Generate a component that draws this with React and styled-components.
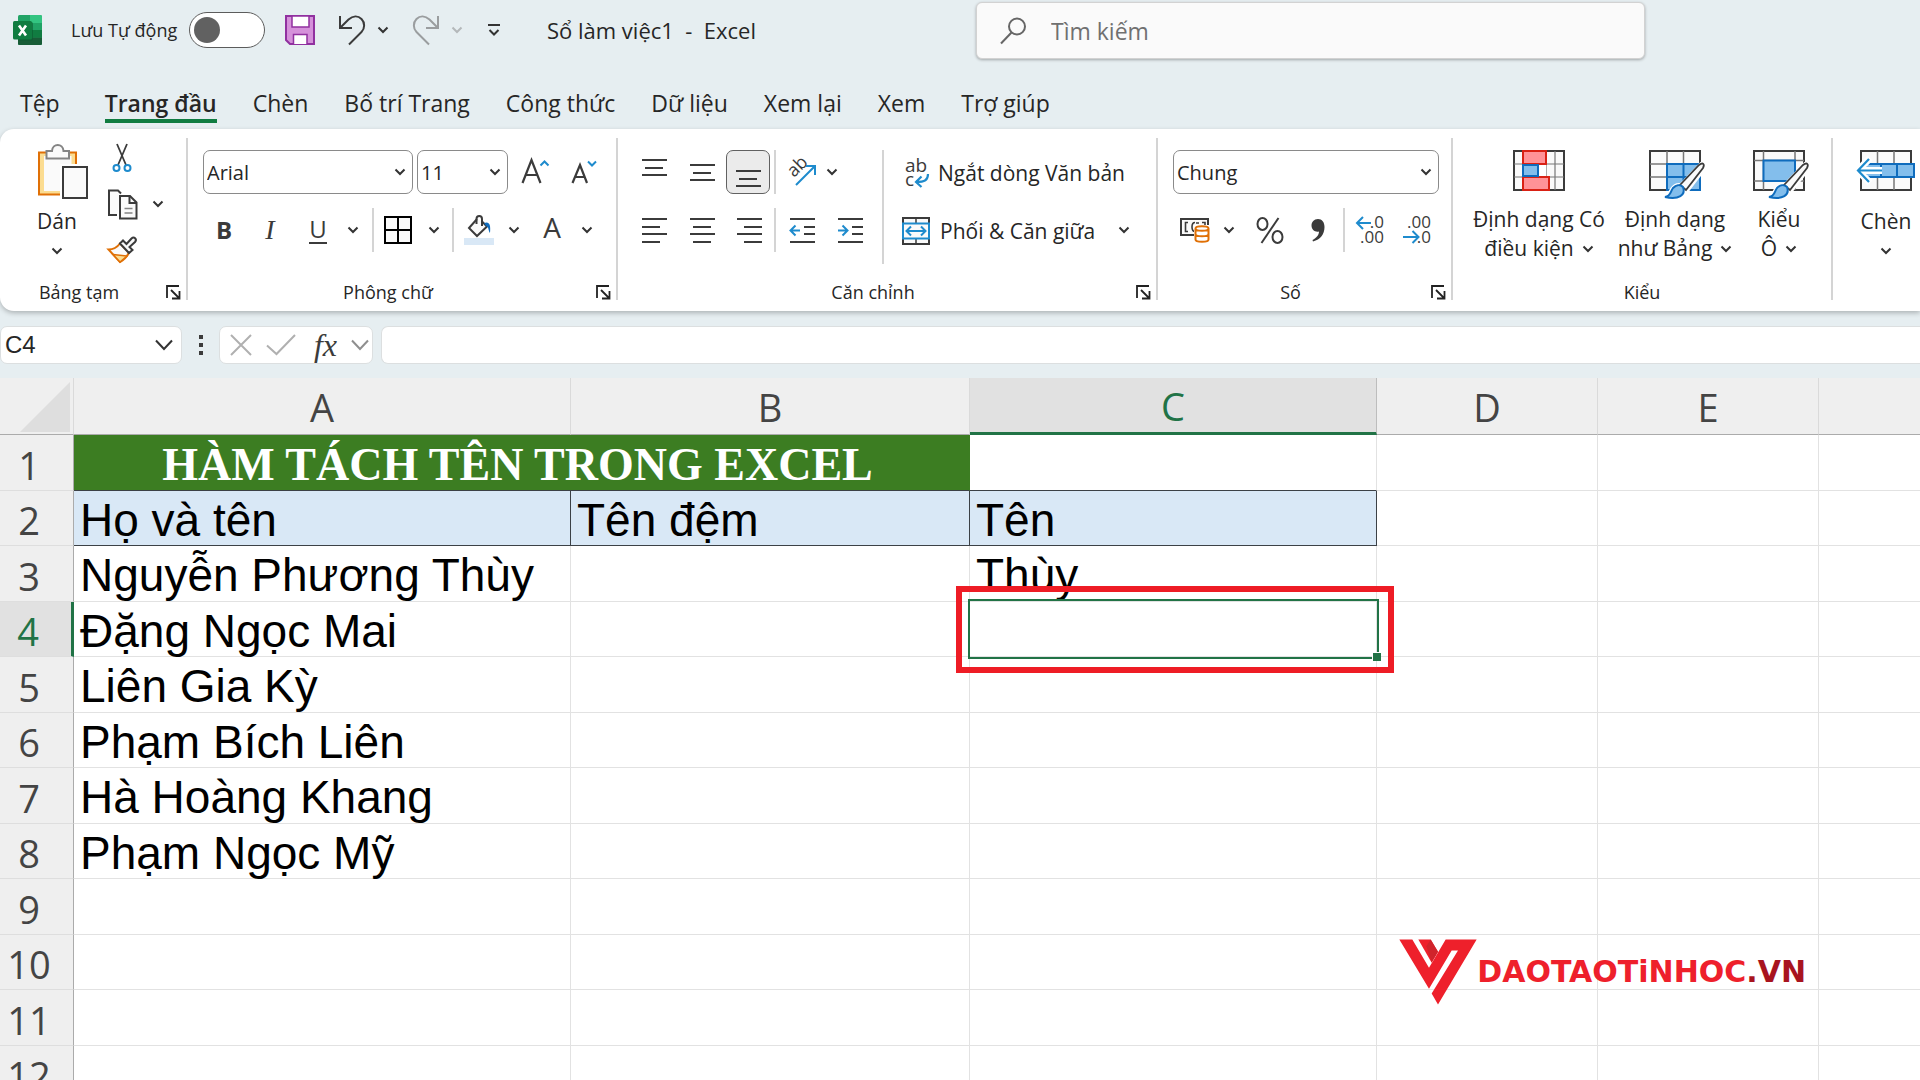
import React from 'react';
import styled, { createGlobalStyle, css } from 'styled-components';

const UI_FONT = "'Open Sans', 'Noto Sans', sans-serif";
const INK = '#3b3b3b';
const BLUE = '#1e8bcd';
const GREEN = '#217346';

const GlobalStyle = createGlobalStyle`
  *, *::before, *::after {
    box-sizing: border-box;
  }

  body {
    margin: 0;
    background: #e6eef1;
    font-family: ${UI_FONT};
    color: #262626;
  }

  button, input, select {
    font-family: inherit;
    color: inherit;
  }
`;

const Window = styled.div`
  display: flex;
  flex-direction: column;
  height: 100vh;
  overflow: hidden;
`;

const PlainButton = styled.button`
  display: flex;
  align-items: center;
  justify-content: center;
  flex: none;
  padding: 0;
  border: 0;
  background: none;
`;

const Icon = styled.svg`
  flex: none;
  overflow: visible;
`;

/* ---------- title bar ---------- */

const TitleBar = styled.header`
  display: flex;
  align-items: flex-start;
  height: 62px;
  flex: none;
`;

const QuickAccess = styled.div`
  display: flex;
  align-items: center;
  flex: 0 0 976px;
  height: 60px;
  padding-left: 13px;
`;

const AutoSave = styled.label`
  display: flex;
  align-items: center;
  justify-content: space-between;
  width: 194px;
  margin: 0 20px 0 28px;
  font-size: 18px;
  white-space: nowrap;
`;

const Switch = styled.input`
  appearance: none;
  flex: none;
  width: 76px;
  height: 36px;
  margin: 0;
  padding: 4px;
  border: 1px solid #5c5c5c;
  border-radius: 18px;
  background: #fff;

  &::before {
    content: '';
    display: block;
    width: 26px;
    height: 26px;
    border-radius: 50%;
    background: #616161;
  }
`;

const SplitButton = styled.div`
  display: flex;
  align-items: center;
  gap: 11px;
  margin-left: 23px;
`;

const CustomizeButton = styled(PlainButton)`
  margin: 0 46px 0 24px;
`;

const DocTitle = styled.div`
  font-size: 22px;
  white-space: pre;
`;

const SearchBox = styled.label`
  display: flex;
  align-items: center;
  gap: 25px;
  flex: 0 1 669px;
  height: 57px;
  margin-top: 2px;
  padding: 0 23px;
  border: 1px solid #d2d2d2;
  border-radius: 6px;
  background: #fafafa;
  box-shadow: 0 1px 3px rgba(0, 0, 0, 0.3);

  input {
    flex: 1;
    min-width: 0;
    padding: 0;
    border: 0;
    outline: 0;
    background: none;
    font-size: 23px;
  }

  input::placeholder {
    color: #707070;
  }
`;

/* ---------- ribbon ---------- */

const Tabs = styled.nav`
  display: flex;
  flex: none;
  gap: 36px;
  padding: 25px 20px 6px;
`;

const Tab = styled(PlainButton)`
  height: 36px;
  border-bottom: 4px solid ${(props) => (props.$active ? '#107c41' : 'transparent')};
  font-size: 23px;
  font-weight: ${(props) => (props.$active ? 600 : 400)};
  line-height: 32px;
  white-space: nowrap;

  &:first-child {
    margin-right: 9px;
  }
`;

const Ribbon = styled.section`
  display: flex;
  flex: none;
  height: 182px;
  padding: 9px 0 11px;
  border-radius: 14px 0 0 14px;
  background: #fff;
  box-shadow: 0 2px 5px rgba(0, 0, 0, 0.25);
`;

const Group = styled.div`
  display: flex;
  flex-direction: column;
  justify-content: space-between;
  flex: 0 0 ${(props) => props.$w}px;
  border-right: 2px solid #d4d4d4;
`;

const GroupBody = styled.div`
  display: flex;
  align-items: flex-start;
  padding: ${(props) => props.$top}px 0 0 ${(props) => props.$left}px;
`;

const GroupFooter = styled.div`
  display: flex;
  align-items: center;
  gap: 8px;
  height: 24px;
  margin-bottom: -4px;
  padding-right: ${(props) => (props.$launcher ? 5 : 0)}px;
`;

const Caption = styled.span`
  flex: 1;
  font-size: 18px;
  text-align: center;
`;

const Column = styled.div`
  display: flex;
  flex-direction: column;
  gap: ${(props) => props.$gap}px;
  padding-left: ${(props) => props.$left || 0}px;
`;

const Line = styled.div`
  display: flex;
  align-items: center;
`;

const Tool = styled(PlainButton)`
  width: ${(props) => props.$w}px;
  height: ${(props) => props.$h || 44}px;
  color: ${INK};
  ${(props) =>
    props.$pressed &&
    css`
      border: 1px solid #616161;
      border-radius: 7px;
      background: #ebebeb;
    `}
`;

const BigTool = styled(PlainButton)`
  flex-direction: column;
  justify-content: flex-start;
  width: ${(props) => props.$w}px;
  padding-top: ${(props) => props.$top || 0}px;
  font-size: 21px;
  line-height: 29px;
`;

const BigLabel = styled.span`
  display: flex;
  align-items: center;
  justify-content: center;
  gap: 8px;
  height: 29px;
  white-space: nowrap;
`;

const BigIcon = styled.span`
  display: flex;
  height: ${(props) => props.$h}px;
`;

const WideTool = styled(PlainButton)`
  justify-content: flex-start;
  gap: 10px;
  height: 44px;
  padding-top: 2px;
  font-size: 21px;
  white-space: nowrap;
`;

const Spacer = styled.span`
  flex: none;
  width: ${(props) => props.$w}px;
`;

const Rule = styled.span`
  flex: none;
  width: 2px;
  height: ${(props) => props.$h || 44}px;
  background: #d4d4d4;
`;

const Combo = styled.span`
  display: flex;
  align-items: center;
  width: ${(props) => props.$w}px;
  height: 44px;
  padding-right: 6px;
  border: 1px solid #8a8a8a;
  border-radius: 7px;
  background: #fff;

  & + & {
    margin-left: 4px;
  }

  select {
    appearance: none;
    flex: 1;
    min-width: 0;
    height: 100%;
    padding: 0 3px;
    border: 0;
    background: none;
    font-size: 20px;
  }
`;

const Glyph = styled.span`
  font-size: ${(props) => (props.$large ? 28 : 24)}px;
  line-height: 26px;
  ${(props) => props.$large && 'padding-bottom: 6px;'}
  ${(props) => props.$bold && 'font-weight: 700;'}
  ${(props) => props.$underline && `border-bottom: 2px solid ${INK};`}
  ${(props) =>
    props.$italic &&
    css`
      font-family: 'Liberation Serif', serif;
      font-size: 28px;
      font-style: italic;
    `}
`;

/* ---------- formula bar ---------- */

const FormulaBar = styled.section`
  display: flex;
  align-items: center;
  flex: none;
  height: 67px;
`;

const FieldBox = styled.div`
  display: flex;
  align-items: center;
  min-width: 0;
  height: 38px;
  border: 1px solid #dcdfe0;
  border-radius: 7px;
  background: #fff;
`;

const NameBox = styled(FieldBox)`
  flex: 0 0 182px;
  padding: 0 8px 0 4px;

  input {
    width: 100%;
    min-width: 0;
    padding: 0;
    border: 0;
    font: 24px 'Liberation Sans', Arial, sans-serif;
  }
`;

const Dots = styled.span`
  display: flex;
  flex-direction: column;
  flex: none;
  align-items: center;
  gap: 4px;
  width: 37px;

  i {
    width: 4px;
    height: 4px;
    background: ${INK};
  }
`;

const FxBox = styled(FieldBox)`
  flex: 0 0 154px;
  justify-content: space-between;
  padding: 0 3px 0 10px;
`;

const FxLabel = styled.span`
  padding-left: 4px;
  font: italic 32px/36px 'Liberation Serif', serif;
  color: ${INK};
`;

const FormulaField = styled.input`
  flex: 1;
  min-width: 0;
  height: 38px;
  margin-left: 8px;
  padding: 0 8px;
  border: 1px solid #dcdfe0;
  border-right: 0;
  border-radius: 7px 0 0 7px;
  background: #fff;
  font-size: 20px;
`;

/* ---------- sheet ---------- */

const SheetArea = styled.main`
  position: relative;
  flex: 1;
  min-height: 0;
  overflow: hidden;
  background: #fff;
`;

const Sheet = styled.table`
  width: 100%;
  table-layout: fixed;
  border-collapse: separate;
  border-spacing: 0;

  td:last-child,
  th:last-child {
    border-right: 0;
  }
`;

const Corner = styled.th`
  height: 57px;
  padding: 4px 4px 2px 20px;
  border-right: 1px solid #dadada;
  border-bottom: 1px solid #ababab;
  background: #efefef;
  vertical-align: top;

  svg {
    display: block;
  }
`;

const ColHead = styled.th`
  height: 57px;
  padding: 2px 0 0;
  border-right: 1px solid ${(props) => (props.$active ? '#bdbdbd' : '#dadada')};
  border-bottom: ${(props) => (props.$active ? `3px solid ${GREEN}` : '1px solid #ababab')};
  background: ${(props) => (props.$active ? '#e1e1e1' : '#efefef')};
  color: ${(props) => (props.$active ? GREEN : '#444')};
  font-size: 38px;
  font-weight: 400;
  line-height: 50px;
`;

const Row = styled.tr`
  height: ${(props) => (props.$odd ? 56 : 55)}px;
`;

const RowHead = styled.th`
  padding: 4px 15px 0 0;
  border-right: ${(props) => (props.$active ? `3px solid ${GREEN}` : '1px solid #ababab')};
  border-bottom: 1px solid #dedede;
  background: ${(props) => (props.$active ? '#e1e1e1' : '#efefef')};
  color: ${(props) => (props.$active ? GREEN : '#444')};
  font-size: 38px;
  font-weight: 400;
  line-height: 50px;
`;

const Cell = styled.td`
  position: relative;
  padding: 3px 0 0 6px;
  border-right: 1px solid ${(props) => (props.$head ? '#3c4146' : '#e2e2e2')};
  border-bottom: 1px solid ${(props) => (props.$head || props.$overHead ? '#3c4146' : '#e2e2e2')};
  background: ${(props) => (props.$head ? '#d9e8f6' : 'transparent')};
  color: #000;
  font-family: 'Liberation Sans', Arial, sans-serif;
  font-size: 46px;
  line-height: 50px;
  white-space: nowrap;
`;

const TitleCell = styled(Cell)`
  padding: 4px 8px 0 0;
  border-right-color: #3c7d22;
  background: #3c7d22;
  color: #fff;
  font-family: 'Liberation Serif', 'Times New Roman', serif;
  font-weight: 700;
  text-align: center;
`;

// active cell frame with the red callout around it
const Selection = styled.div`
  position: absolute;
  inset: -3px -3px -3px -2px;
  z-index: 1;
  border: 2px solid ${GREEN};

  &::before {
    content: '';
    position: absolute;
    inset: -15px -17px -16px -14px;
    border: 6px solid #ee1c25;
  }

  &::after {
    content: '';
    position: absolute;
    right: -4px;
    bottom: -4px;
    width: 9px;
    height: 9px;
    border: solid #fff;
    border-width: 1px 0 0 1px;
    background: ${GREEN};
  }
`;

const Watermark = styled.div`
  position: absolute;
  top: 561px;
  right: 114px;
  display: flex;
  align-items: center;
  color: #ee202b;
  font-family: 'DejaVu Sans', sans-serif;
  font-size: 30px;
  font-weight: 700;
  line-height: 66px;

  b {
    color: #a8141e;
  }
`;

/* ---------- icons ---------- */

const Svg = ({ w, h, box, children }) => (
  <Icon width={w} height={h} viewBox={box || `0 0 ${w} ${h}`} fill="none" aria-hidden="true">
    {children}
  </Icon>
);

const Chevron = ({ color = '#333' }) => (
  <Svg w={12} h={8}>
    <path d="M1.5 1.5 6 6l4.5-4.5" stroke={color} strokeWidth="2" />
  </Svg>
);

const WideChevron = ({ color = '#333' }) => (
  <Svg w={18} h={12}>
    <path d="M1 1.5 9 10l8-8.5" stroke={color} strokeWidth="2" />
  </Svg>
);

const ExcelLogo = () => (
  <Svg w={30} h={30}>
    <rect x="5" y="0" width="24" height="30" rx="1.5" fill="#21a366" />
    <path d="M17 0h10.500q1.500 0 1.500 1.500V8H17z" fill="#33c481" />
    <path d="M5 8h12v7H5z" fill="#21a366" />
    <path d="M5 15h24v7.500H5z" fill="#107c41" />
    <path d="M5 22.500h24v6q0 1.500-1.500 1.500h-21Q5 30 5 28.500z" fill="#185c37" />
    <path d="M5 7h13.500q1.500 0 1.500 1.500V24q0 1.500-1.500 1.500H5z" fill="#0b5a30" opacity=".6" />
    <rect x="0" y="6" width="19" height="18.500" rx="1.5" fill="#107c41" />
    <path d="M6 10.500 13 20.500M13 10.500 6 20.500" stroke="#fff" strokeWidth="2.600" />
  </Svg>
);

const SaveIcon = () => (
  <Svg w={30} h={30}>
    <path d="M1 1h28v28H5L1 25z" fill="#d591da" stroke="#9131a0" strokeWidth="2" />
    <path d="M7 1h17v11H7z" fill="#fff" stroke="#9131a0" strokeWidth="1.5" />
    <path d="M8.500 29v-9.500H22V29" fill="#fff" stroke="#9131a0" strokeWidth="1.5" />
  </Svg>
);

const UndoIcon = () => (
  <Svg w={28} h={30}>
    <path d="M2 1v12h12M2 13 10.500 4.500C15 .5 20 .5 23.500 4s3.500 9.500 0 13L11 29.500" stroke={INK} strokeWidth="2" />
  </Svg>
);

const RedoIcon = () => (
  <Svg w={28} h={30}>
    <path d="M26 1v12H14M26 13 17.500 4.500C13 .5 8 .5 4.500 4s-3.500 9.500 0 13L17 29.500" stroke="#9a9d9f" strokeWidth="2" />
  </Svg>
);

const CustomizeIcon = () => (
  <Svg w={14} h={14}>
    <path d="M1 2h12M2.500 7 7 11.500 11.500 7" stroke="#333" strokeWidth="2" />
  </Svg>
);

const SearchIcon = () => (
  <Svg w={26} h={28}>
    <circle cx="17" cy="9.500" r="8" stroke="#666" strokeWidth="2" />
    <path d="M11.500 15.500 1 26.500" stroke="#666" strokeWidth="2" />
  </Svg>
);

const PasteIcon = () => (
  <Svg w={62} h={56} box="-12 0 62 56">
    <path d="M1 8.500h37v42H1z" fill="#fbdc91" stroke="#e07006" strokeWidth="2" />
    <path d="M6 12h27.500v35H6z" fill="#fafafa" />
    <path d="M8.500 14.500V7H14C14.500-1 25-1 25.500 7H31v7.500z" fill="#fafafa" stroke="#848484" strokeWidth="2" />
    <path d="M22 20h28v36H22z" fill="#fff" />
    <path d="M25 23h24v31H25z" fill="#fafafa" stroke={INK} strokeWidth="2" />
  </Svg>
);

const CutIcon = () => (
  <Svg w={20} h={30}>
    <path d="M5 1l9 21M15 1 6 22" stroke={INK} strokeWidth="1.800" />
    <circle cx="4.500" cy="25" r="3" stroke={BLUE} strokeWidth="2" />
    <circle cx="15.500" cy="25" r="3" stroke={BLUE} strokeWidth="2" />
  </Svg>
);

const CopyIcon = () => (
  <Svg w={31} h={31}>
    <path d="M10 26H2V1.500h9l3 3" fill="#fafafa" stroke={INK} strokeWidth="2" />
    <path d="M13 7h10l6.500 6.500V29.500H13z" fill="#fafafa" stroke={INK} strokeWidth="2" />
    <path d="M22.500 7v7H29" stroke={INK} strokeWidth="2" />
    <path d="M17.500 19.500h8M17.500 24h8" stroke="#848484" strokeWidth="1.5" />
  </Svg>
);

const PainterIcon = () => (
  <Svg w={30} h={28}>
    <path d="M1.500 13.500c5 0 8.500-2 11.500-6l9 9c-2 4-5 7.500-9 9.500z" fill="#fafafa" stroke="#e07006" strokeWidth="2" />
    <path d="M6 18.500 20 20l-7 6z" fill="#fbdc91" stroke="#e07006" strokeWidth="1.5" />
    <path
      d="M13 7.500 16 4.500l3.500 3.500 5-5.500c2.500-2.500 6 .5 3.500 3.500L22.500 11l3 3-3.500 3z"
      fill="#fafafa"
      stroke={INK}
      strokeWidth="2"
    />
  </Svg>
);

const LauncherIcon = () => (
  <Svg w={15} h={15}>
    <path d="M1 13V1h12M5 5l8 8M13.500 6v7.500H6" stroke="#222" strokeWidth="1.800" />
  </Svg>
);

const GrowIcon = () => (
  <Svg w={28} h={26}>
    <path d="M1.500 24 10.500 1l9 23M4.500 16h12" stroke={INK} strokeWidth="2.200" />
    <path d="M19.500 6.500 23.500 2.500l4 4" stroke={BLUE} strokeWidth="2" />
  </Svg>
);

const ShrinkIcon = () => (
  <Svg w={26} h={26}>
    <path d="M1.500 24 9 6l7 18M4 18h10" stroke={INK} strokeWidth="2.200" />
    <path d="M17 2.500l4 4 4-4" stroke={BLUE} strokeWidth="2" />
  </Svg>
);

const BordersIcon = () => (
  <Svg w={28} h={28}>
    <path d="M1 1h26v26H1zM14 1v26M1 14h26" fill="#fafafa" stroke="#000" strokeWidth="2" />
  </Svg>
);

const FillIcon = () => (
  <Svg w={30} h={30}>
    <path d="M13 4 5 13l8 8 10-9.500-5-5" fill="#fafafa" stroke={INK} strokeWidth="2" />
    <path d="M12.500 9V4c0-4 5.500-4 5.500 0v7" stroke={INK} strokeWidth="2" />
    <path d="M20 8c5-2 7 1 6 10-2-3-1-6-4-7z" fill="#0f6cbd" />
    <rect y="23" width="30" height="7" fill="#d9e8f6" />
  </Svg>
);

// each line is [x, y, width]
const LinesIcon = ({ lines, children }) => (
  <Svg w={27} h={28}>
    {lines.map(([x, y, w]) => (
      <path key={y} d={`M${x} ${y}h${w}`} stroke={INK} strokeWidth="2" />
    ))}
    {children}
  </Svg>
);

const OrientationIcon = () => (
  <Svg w={30} h={30}>
    <text transform="translate(8 21) rotate(-45)" fontSize="18" fill={INK} fontFamily="Open Sans, sans-serif">
      ab
    </text>
    <path d="M10 28 28 10M20 9h9v9" stroke={BLUE} strokeWidth="2" />
  </Svg>
);

const WrapIcon = () => (
  <Svg w={26} h={32}>
    <text x="3" y="15" fontSize="19" fill={INK} fontFamily="Open Sans, sans-serif">
      ab
    </text>
    <text x="3" y="29" fontSize="19" fill={INK} fontFamily="Open Sans, sans-serif">
      c
    </text>
    <path d="M26 17c0 6-3 8-12 8M19.500 19.500 14 25l5.500 5" stroke={BLUE} strokeWidth="2.200" />
  </Svg>
);

const MergeIcon = () => (
  <Svg w={28} h={28}>
    <path d="M1 1h26v26H1z" fill="#fafafa" stroke={INK} strokeWidth="2" />
    <path d="M14 1v5M14 22v5" stroke={INK} strokeWidth="1.5" />
    <path d="M1 6.500h26v15H1z" fill="#fafafa" stroke={BLUE} strokeWidth="2" />
    <path d="M5 14h18M9 9.500 4.500 14 9 18.500M19 9.500l4.500 4.500-4.500 4.500" stroke={BLUE} strokeWidth="2" />
  </Svg>
);

const CurrencyIcon = () => (
  <Svg w={30} h={26}>
    <path d="M1 2h27v16H1z" fill="#fafafa" stroke={INK} strokeWidth="2" />
    <path d="M8 5.500H5.500v9H8M15 5.500c-4 0-4 9 0 9M22 5.500h3v3M16 6h3" stroke={INK} strokeWidth="1.600" />
    <path d="M14 8h16v18H14z" fill="#fff" />
    <path
      d="M15.500 11.500v11c0 3 13 3 13 0v-11c0-3-13-3-13 0 0 3 13 3 13 0M15.500 17c0 3 13 3 13 0"
      stroke="#e07006"
      strokeWidth="2"
    />
  </Svg>
);

const PercentIcon = () => (
  <Svg w={28} h={27}>
    <ellipse cx="6.500" cy="7" rx="5" ry="6" stroke={INK} strokeWidth="2" />
    <ellipse cx="21.500" cy="20" rx="5" ry="6" stroke={INK} strokeWidth="2" />
    <path d="M22.500 1 5.500 26" stroke={INK} strokeWidth="2" />
  </Svg>
);

const CommaIcon = () => (
  <Svg w={14} h={24}>
    <path
      d="M7 1c4 0 6.500 3 6.500 8 0 7-4 12.500-11.500 14.500l-.5-1.500c4-2 6.500-5 6.500-8.500C4 14.500.5 11.500.5 7.500.5 4 3 1 7 1z"
      fill={INK}
    />
  </Svg>
);

const DecimalIcon = ({ more }) => (
  <Svg w={30} h={30}>
    <text x="29" y="13" textAnchor="end" fontSize="17" fill={INK} fontFamily="Open Sans, sans-serif">
      {more ? '.0' : '.00'}
    </text>
    <text x="29" y="28" textAnchor="end" fontSize="17" fill={INK} fontFamily="Open Sans, sans-serif">
      {more ? '.00' : '.0'}
    </text>
    {more ? (
      <path d="M16 8H1.500M8 2 2 8l6 6" stroke={BLUE} strokeWidth="2" />
    ) : (
      <path d="M1 22h15.500M10.500 16l6 6-6 6" stroke={BLUE} strokeWidth="2" />
    )}
  </Svg>
);

const ConditionalIcon = () => (
  <Svg w={52} h={42}>
    <path d="M1 1h50v39H1z" fill="#fafafa" stroke={INK} strokeWidth="2" />
    <path d="M10 1v39M33 1v39M42 1v39M1 14h50M1 27h50" stroke="#777" strokeWidth="1.200" />
    <path d="M10 14h23v13H10z" fill="#fff" />
    <path d="M10 1h23v13H10zM10 27h26v13H10z" fill="#ff9297" stroke="#d92114" strokeWidth="2" />
    <path d="M10 15h15v11H10z" fill="#83beec" stroke="#0f6cbd" strokeWidth="2" />
  </Svg>
);

const Brush = () => (
  <>
    <path
      d="M53 14c3-2 4 0 2 4L38 40c-3 9-12 10-23 8 5-1 6-4 8-8 3-4 6-5 9-4z"
      fill="#fff"
      stroke="#fff"
      strokeWidth="5"
    />
    <path d="M31 35 50 15c4-3 6-1 4 3L37 40z" fill="#fafafa" stroke={INK} strokeWidth="1.800" />
    <path d="M34 37c3 8-4 13-18 10 6-1 5-5 8-9 3-3 7-4 10-1z" fill="#83beec" stroke="#0f6cbd" strokeWidth="2" />
  </>
);

const TableIcon = () => (
  <Svg w={60} h={50} box="-4 0 60 50">
    <path d="M1 1h50v39H1z" fill="#fafafa" stroke={INK} strokeWidth="2" />
    <path d="M18 1v39M34.500 1v39M1 14h50M1 27h50" stroke="#777" strokeWidth="1.5" />
    <path d="M18 14h33v26H18zM34.500 14v26M18 27h33" fill="#83beec" stroke="#0f6cbd" strokeWidth="2" />
    <Brush />
  </Svg>
);

const CellStyleIcon = () => (
  <Svg w={60} h={50} box="-4 0 60 50">
    <path d="M1 1h50v39H1z" fill="#fafafa" stroke={INK} strokeWidth="2" />
    <path d="M10.500 1v39M42 1v39M1 10.500h50M1 31h50" stroke="#777" strokeWidth="1.5" />
    <path d="M10.500 10.500H42V31H10.500z" fill="#83beec" stroke="#0f6cbd" strokeWidth="2" />
    <Brush />
  </Svg>
);

const InsertIcon = () => (
  <Svg w={60} h={42}>
    <path d="M5 1h50v39H5z" fill="#fafafa" stroke={INK} strokeWidth="2" />
    <path d="M21.500 1v39M38 1v39M5 14h50M5 27h50" stroke="#777" strokeWidth="1.5" />
    <path d="M10 14h48v13H10zM25 14v13M41 14v13" fill="#83beec" stroke="#0f6cbd" strokeWidth="2" />
    <path d="M26 20.500H3M14 8 2 20.500 14 33" stroke="#fff" strokeWidth="7" />
    <path d="M26 20.500H2M13 9 2 20.500 13 32" stroke={BLUE} strokeWidth="2.200" />
  </Svg>
);

const BrandMark = () => (
  <Svg w={78} h={66} box="50 59 234 197">
    <path d="M51 60H90L140 145 190 60H283L167 255 148 222 227 93H208L140 208z" fill="#ee202b" />
    <path d="M108 60H145L167 97 148 130z" fill="#ee202b" />
    <path d="M145 60 167 97 148 128 132 80z" fill="#d0242b" />
  </Svg>
);

/* ---------- content ---------- */

const TABS = ['Tệp', 'Trang đầu', 'Chèn', 'Bố trí Trang', 'Công thức', 'Dữ liệu', 'Xem lại', 'Xem', 'Trợ giúp'];

const COLUMNS = [
  { name: 'A', width: 497 },
  { name: 'B', width: 399 },
  { name: 'C', width: 407 },
  { name: 'D', width: 221 },
  { name: 'E', width: 221 },
  { name: '' },
];

const ROWS = [
  ['HÀM TÁCH TÊN TRONG EXCEL'],
  ['Họ và tên', 'Tên đệm', 'Tên'],
  ['Nguyễn Phương Thùy', '', 'Thùy'],
  ['Đặng Ngọc Mai'],
  ['Liên Gia Kỳ'],
  ['Phạm Bích Liên'],
  ['Hà Hoàng Khang'],
  ['Phạm Ngọc Mỹ'],
  [],
  [],
  [],
  [],
];

const ALIGN = {
  top: [[1, 2, 25], [4, 10, 18], [1, 17, 25]],
  middle: [[1, 7, 25], [4, 15, 18], [1, 22, 25]],
  bottom: [[1, 13, 25], [4, 21, 18], [1, 28, 25]],
  left: [[1, 3, 25], [1, 11, 18], [1, 18, 25], [1, 26, 18]],
  center: [[1, 3, 25], [4, 11, 18], [1, 18, 25], [4, 26, 18]],
  right: [[1, 3, 25], [8, 11, 18], [1, 18, 25], [8, 26, 18]],
  indent: [[1, 3, 25], [15, 11, 11], [15, 18, 11], [1, 26, 25]],
};

const ComboBox = ({ label, value, width }) => (
  <Combo $w={width}>
    <select aria-label={label} defaultValue={value}>
      <option>{value}</option>
    </select>
    <Chevron />
  </Combo>
);

const RibbonGroup = ({ title, width, left, top = 12, launcher = true, children }) => (
  <Group $w={width}>
    <GroupBody $left={left} $top={top}>
      {children}
    </GroupBody>
    <GroupFooter $launcher={launcher}>
      <Caption>{title}</Caption>
      {launcher && (
        <PlainButton aria-label={`${title}: tùy chọn`}>
          <LauncherIcon />
        </PlainButton>
      )}
    </GroupFooter>
  </Group>
);

const Arrow = ({ w = 24, label = 'Thêm' }) => (
  <Tool $w={w} $h={40} aria-label={label}>
    <Chevron />
  </Tool>
);

const App = () => (
  <Window>
    <GlobalStyle />

    <TitleBar>
      <QuickAccess>
        <ExcelLogo />
        <AutoSave>
          Lưu Tự động
          <Switch type="checkbox" role="switch" />
        </AutoSave>
        <PlainButton aria-label="Lưu">
          <SaveIcon />
        </PlainButton>
        <SplitButton>
          <PlainButton aria-label="Hoàn tác">
            <UndoIcon />
          </PlainButton>
          <PlainButton aria-label="Danh sách hoàn tác">
            <Chevron />
          </PlainButton>
        </SplitButton>
        <SplitButton>
          <PlainButton aria-label="Làm lại">
            <RedoIcon />
          </PlainButton>
          <PlainButton aria-label="Danh sách làm lại">
            <Chevron color="#b4b8ba" />
          </PlainButton>
        </SplitButton>
        <CustomizeButton aria-label="Tùy chỉnh">
          <CustomizeIcon />
        </CustomizeButton>
        <DocTitle>{'Sổ làm việc1  -  Excel'}</DocTitle>
      </QuickAccess>
      <SearchBox>
        <SearchIcon />
        <input type="search" placeholder="Tìm kiếm" aria-label="Tìm kiếm" />
      </SearchBox>
    </TitleBar>

    <Tabs>
      {TABS.map((tab) => (
        <Tab key={tab} $active={tab === 'Trang đầu'}>
          {tab}
        </Tab>
      ))}
    </Tabs>

    <Ribbon>
      <RibbonGroup title="Bảng tạm" width={188} left={26} top={0}>
        <BigTool $w={62} $top={6}>
          <BigIcon $h={63}>
            <PasteIcon />
          </BigIcon>
          <BigLabel>Dán</BigLabel>
          <BigLabel>
            <Chevron />
          </BigLabel>
        </BigTool>
        <Column $gap={6} $left={4}>
          <Tool $w={60} $h={40} aria-label="Cắt">
            <CutIcon />
          </Tool>
          <Line>
            <Tool $w={60} $h={40} aria-label="Sao chép">
              <CopyIcon />
            </Tool>
            <Arrow w={12} label="Tùy chọn sao chép" />
          </Line>
          <Tool $w={60} $h={40} aria-label="Sao chép định dạng">
            <PainterIcon />
          </Tool>
        </Column>
      </RibbonGroup>

      <RibbonGroup title="Phông chữ" width={430} left={15}>
        <Column $gap={14}>
          <Line>
            <ComboBox label="Phông chữ" value="Arial" width={210} />
            <ComboBox label="Cỡ chữ" value="11" width={91} />
            <Tool $w={54} aria-label="Tăng cỡ chữ">
              <GrowIcon />
            </Tool>
            <Tool $w={44} aria-label="Giảm cỡ chữ">
              <ShrinkIcon />
            </Tool>
          </Line>
          <Line>
            <Tool $w={42} aria-label="Đậm">
              <Glyph $bold>B</Glyph>
            </Tool>
            <Tool $w={50} aria-label="Nghiêng">
              <Glyph $italic>I</Glyph>
            </Tool>
            <Tool $w={46} aria-label="Gạch chân">
              <Glyph $underline>U</Glyph>
            </Tool>
            <Arrow />
            <Spacer $w={7} />
            <Rule />
            <Tool $w={48} aria-label="Viền">
              <BordersIcon />
            </Tool>
            <Arrow />
            <Spacer $w={6} />
            <Rule />
            <Tool $w={50} aria-label="Màu nền">
              <FillIcon />
            </Tool>
            <Arrow w={20} />
            <Tool $w={56} aria-label="Màu chữ">
              <Glyph $large>A</Glyph>
            </Tool>
            <Arrow w={14} />
          </Line>
        </Column>
      </RibbonGroup>

      <RibbonGroup title="Căn chỉnh" width={540} left={12}>
        <Column $gap={14}>
          <Line>
            <Tool $w={48} aria-label="Căn trên">
              <LinesIcon lines={ALIGN.top} />
            </Tool>
            <Tool $w={48} aria-label="Căn giữa dọc">
              <LinesIcon lines={ALIGN.middle} />
            </Tool>
            <Tool $w={44} $pressed aria-label="Căn dưới">
              <LinesIcon lines={ALIGN.bottom} />
            </Tool>
            <Spacer $w={4} />
            <Rule />
            <Tool $w={50} aria-label="Hướng">
              <OrientationIcon />
            </Tool>
            <Arrow w={12} />
          </Line>
          <Line>
            <Tool $w={48} aria-label="Căn trái">
              <LinesIcon lines={ALIGN.left} />
            </Tool>
            <Tool $w={48} aria-label="Căn giữa">
              <LinesIcon lines={ALIGN.center} />
            </Tool>
            <Tool $w={46} aria-label="Căn phải">
              <LinesIcon lines={ALIGN.right} />
            </Tool>
            <Spacer $w={2} />
            <Rule />
            <Tool $w={52} aria-label="Giảm thụt lề">
              <LinesIcon lines={ALIGN.indent}>
                <path d="M11 14.500H2M6.500 9.500l-5 5 5 5" stroke={BLUE} strokeWidth="2" />
              </LinesIcon>
            </Tool>
            <Tool $w={44} aria-label="Tăng thụt lề">
              <LinesIcon lines={ALIGN.indent}>
                <path d="M1 14.500h9M5.500 9.500l5 5-5 5" stroke={BLUE} strokeWidth="2" />
              </LinesIcon>
            </Tool>
          </Line>
        </Column>
        <Spacer $w={10} />
        <Rule $h={114} />
        <Spacer $w={18} />
        <Column $gap={14}>
          <WideTool>
            <WrapIcon />
            Ngắt dòng Văn bản
          </WideTool>
          <Line>
            <WideTool>
              <MergeIcon />
              Phối &amp; Căn giữa
            </WideTool>
            <Arrow w={58} />
          </Line>
        </Column>
      </RibbonGroup>

      <RibbonGroup title="Số" width={295} left={15}>
        <Column $gap={14}>
          <ComboBox label="Định dạng số" value="Chung" width={266} />
          <Line>
            <Tool $w={44} aria-label="Tiền tệ">
              <CurrencyIcon />
            </Tool>
            <Arrow />
            <Tool $w={58} aria-label="Phần trăm">
              <PercentIcon />
            </Tool>
            <Tool $w={38} aria-label="Dấu phẩy">
              <CommaIcon />
            </Tool>
            <Spacer $w={6} />
            <Rule />
            <Tool $w={50} aria-label="Tăng số thập phân">
              <DecimalIcon more />
            </Tool>
            <Tool $w={44} aria-label="Giảm số thập phân">
              <DecimalIcon />
            </Tool>
          </Line>
        </Column>
      </RibbonGroup>

      <RibbonGroup title="Kiểu" width={380} left={13} launcher={false}>
        <BigTool $w={146}>
          <BigIcon $h={55}>
            <ConditionalIcon />
          </BigIcon>
          <BigLabel>Định dạng Có</BigLabel>
          <BigLabel>
            điều kiện <Chevron />
          </BigLabel>
        </BigTool>
        <BigTool $w={126}>
          <BigIcon $h={55}>
            <TableIcon />
          </BigIcon>
          <BigLabel>Định dạng</BigLabel>
          <BigLabel>
            như Bảng <Chevron />
          </BigLabel>
        </BigTool>
        <BigTool $w={82}>
          <BigIcon $h={55}>
            <CellStyleIcon />
          </BigIcon>
          <BigLabel>Kiểu</BigLabel>
          <BigLabel>
            Ô <Chevron />
          </BigLabel>
        </BigTool>
      </RibbonGroup>

      <GroupBody $left={23} $top={12}>
        <BigTool $w={60}>
          <BigIcon $h={57}>
            <InsertIcon />
          </BigIcon>
          <BigLabel>Chèn</BigLabel>
          <BigLabel>
            <Chevron />
          </BigLabel>
        </BigTool>
      </GroupBody>
    </Ribbon>

    <FormulaBar>
      <NameBox>
        <input aria-label="Hộp tên" defaultValue="C4" />
        <WideChevron />
      </NameBox>
      <Dots>
        <i />
        <i />
        <i />
      </Dots>
      <FxBox>
        <PlainButton aria-label="Hủy">
          <Svg w={22} h={22}>
            <path d="M1 1l20 20M21 1 1 21" stroke="#b0b0b0" strokeWidth="2" />
          </Svg>
        </PlainButton>
        <PlainButton aria-label="Nhập">
          <Svg w={30} h={22}>
            <path d="M1 11.500 10.500 20 29 1" stroke="#b0b0b0" strokeWidth="2" />
          </Svg>
        </PlainButton>
        <PlainButton aria-label="Chèn hàm">
          <FxLabel>fx</FxLabel>
        </PlainButton>
        <PlainButton aria-label="Danh sách hàm">
          <WideChevron color="#8f8f8f" />
        </PlainButton>
      </FxBox>
      <FormulaField aria-label="Thanh công thức" />
    </FormulaBar>

    <SheetArea>
      <Sheet>
        <colgroup>
          <col width="74" />
          {COLUMNS.map((col) => (
            <col key={col.name} width={col.width} />
          ))}
        </colgroup>
        <thead>
          <tr>
            <Corner>
              <Svg w={50} h={50}>
                <path d="M50 0v50H0z" fill="#dedede" />
              </Svg>
            </Corner>
            {COLUMNS.map((col) => (
              <ColHead key={col.name} $active={col.name === 'C'}>
                {col.name}
              </ColHead>
            ))}
          </tr>
        </thead>
        <tbody>
          {ROWS.map((row, r) => (
            <Row key={r} $odd={r % 2 === 0}>
              <RowHead $active={r === 3}>{r + 1}</RowHead>
              {COLUMNS.map((col, c) => {
                if (r === 0 && c === 0) {
                  return (
                    <TitleCell key={c} colSpan={2} $overHead>
                      {row[0]}
                    </TitleCell>
                  );
                }
                if (r === 0 && c === 1) return null;
                return (
                  <Cell key={c} $head={r === 1 && c < 3} $overHead={r === 0 && c < 3}>
                    {row[c]}
                    {r === 3 && c === 2 && <Selection />}
                  </Cell>
                );
              })}
            </Row>
          ))}
        </tbody>
      </Sheet>
      <Watermark>
        <BrandMark />
        <span>
          DAOTAOTiNHOC<b>.VN</b>
        </span>
      </Watermark>
    </SheetArea>
  </Window>
);

export default App;
